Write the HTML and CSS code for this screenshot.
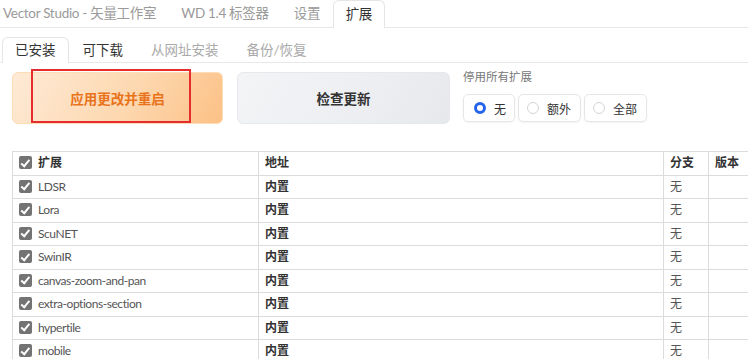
FILE: index.html
```html
<!DOCTYPE html>
<html lang="zh-CN">
<head>
<meta charset="utf-8">
<title>扩展</title>
<link rel="stylesheet" href="styles.css">
</head>
<body>
<nav class="topnav">
  <span class="tab first">Vector Studio - 矢量工作室</span>
  <span class="tab">WD 1.4 标签器</span>
  <span class="tab">设置</span>
  <span class="tab active">扩展</span>
</nav>
<nav class="subnav">
  <span class="subtab active">已安装</span>
  <span class="subtab dark">可下载</span>
  <span class="subtab">从网址安装</span>
  <span class="subtab">备份/恢复</span>
</nav>
<section class="actions">
  <button class="btn primary">应用更改并重启<span class="highlight"></span></button>
  <button class="btn secondary">检查更新</button>
  <div class="disable">
    <div class="disable-label">停用所有扩展</div>
    <div class="radios">
      <label class="radio checked"><span class="dot"></span>无</label>
      <label class="radio"><span class="dot"></span>额外</label>
      <label class="radio"><span class="dot"></span>全部</label>
    </div>
  </div>
</section>
<div class="table-wrap">
<table class="ext">
  <colgroup>
    <col class="c1"><col class="c2"><col class="c3"><col class="c4">
  </colgroup>
  <thead>
    <tr><th><span class="cb"></span>扩展</th><th>地址</th><th>分支</th><th>版本</th></tr>
  </thead>
  <tbody>
    <tr><td class="name"><span class="cb"></span>LDSR</td><td class="b">内置</td><td>无</td><td></td></tr>
    <tr><td class="name"><span class="cb"></span>Lora</td><td class="b">内置</td><td>无</td><td></td></tr>
    <tr><td class="name"><span class="cb"></span>ScuNET</td><td class="b">内置</td><td>无</td><td></td></tr>
    <tr><td class="name"><span class="cb"></span>SwinIR</td><td class="b">内置</td><td>无</td><td></td></tr>
    <tr><td class="name"><span class="cb"></span>canvas-zoom-and-pan</td><td class="b">内置</td><td>无</td><td></td></tr>
    <tr><td class="name"><span class="cb"></span>extra-options-section</td><td class="b">内置</td><td>无</td><td></td></tr>
    <tr><td class="name"><span class="cb"></span>hypertile</td><td class="b">内置</td><td>无</td><td></td></tr>
    <tr><td class="name"><span class="cb"></span>mobile</td><td class="b">内置</td><td>无</td><td></td></tr>
  </tbody>
</table>
</div>
</body>
</html>
```

FILE: styles.css
```css
html, body {
  margin: 0;
  padding: 0;
  background: #fff;
  overflow: hidden;
}
body {
  font-family: Lato, "Noto Sans CJK SC", sans-serif;
  color: #333;
  width: 748px;
  height: 359px;
}

.topnav {
  display: flex;
  align-items: flex-end;
  height: 28px;
  border-bottom: 1px solid #e8e8e8;
  box-sizing: border-box;
}
.tab {
  font-size: 13.5px;
  letter-spacing: -0.3px;
  color: #9a9a9a;
  padding: 0 12.5px;
  height: 27px;
  line-height: 27px;
  box-sizing: border-box;
  white-space: nowrap;
}
.tab.first { padding-left: 3px; }
.tab.active {
  color: #333;
  background: #fff;
  border: 1px solid #e5e5e5;
  border-bottom: none;
  border-radius: 6px 6px 0 0;
  margin-bottom: -1px;
  height: 28px;
  line-height: 26px;
  padding: 0 12px;
}

.subnav {
  display: flex;
  align-items: flex-end;
  height: 35px;
  border-bottom: 1px solid #e8e8e8;
  box-sizing: border-box;
}
.subtab {
  font-size: 13.5px;
  color: #aaa;
  padding: 0 14px;
  height: 24px;
  line-height: 24px;
  white-space: nowrap;
}
.subtab.dark { color: #333; }
.subtab.active {
  color: #333;
  margin-left: 2px;
  border: 1px solid #e5e5e5;
  border-bottom: none;
  border-radius: 6px 6px 0 0;
  background: #fff;
  margin-bottom: -1px;
  height: 25px;
  padding: 0 12px;
}

.actions {
  display: flex;
  align-items: flex-start;
  padding: 9px 12px 0;
}
.btn {
  font-family: inherit;
  font-size: 13.5px;
  font-weight: 700;
  height: 52px;
  border-radius: 6px;
  cursor: pointer;
  position: relative;
}
.btn.primary {
  width: 211px;
  color: #e8731b;
  border: 1px solid #fddcb8;
  background: linear-gradient(120deg, #feead6 0%, #fdd8b0 55%, #fcc186 100%);
}
.btn.secondary {
  width: 213px;
  margin-left: 14px;
  color: #333;
  border: 1px solid #e6e8ec;
  background: linear-gradient(120deg, #f3f4f6 0%, #eceef1 60%, #e6e8ec 100%);
}
.highlight {
  position: absolute;
  left: 18px;
  top: -4px;
  width: 160px;
  height: 54px;
  border: 2px solid #e52d2d;
  box-sizing: border-box;
}

.disable {
  margin-left: 13px;
}
.disable-label {
  font-size: 11.5px;
  color: #777;
  line-height: 14px;
  margin-top: -2px;
}
.radios {
  display: flex;
  gap: 3px;
  margin-top: 10px;
}
.radio {
  display: flex;
  align-items: center;
  height: 28px;
  padding: 0 8px 0 10px;
  border: 1px solid #e6e6e6;
  border-radius: 5px;
  box-shadow: 0 1px 2px rgba(0,0,0,0.05);
  font-size: 12px;
  color: #333;
  box-sizing: border-box;
}
.radio:nth-child(n+2) { padding-left: 8px; padding-right: 9px; }
.dot {
  width: 12px;
  height: 12px;
  border-radius: 50%;
  border: 1px solid #d4d4d4;
  margin-right: 8px;
  box-sizing: border-box;
  background: #fff;
}
.radio.checked .dot {
  border: 3.5px solid #2563eb;
  background: #fff;
}

.table-wrap {
  margin: 27px 0 0 12px;
  overflow: hidden;
}
.ext {
  border-collapse: collapse;
  table-layout: fixed;
  width: 790px;
  font-size: 12px;
}
.ext col.c1 { width: 246px; }
.ext col.c2 { width: 405px; }
.ext col.c3 { width: 45px; }
.ext col.c4 { width: 94px; }
.ext th, .ext td {
  border: 1px solid #dcdcdc;
  text-align: left;
  padding: 0 6px;
  height: 22.5px;
  line-height: 16px;
  white-space: nowrap;
  overflow: hidden;
}
.ext th {
  font-weight: 700;
  color: #333;
}
.ext td { color: #555; }
.ext td.name { letter-spacing: -0.45px; }
.ext td.b { font-weight: 700; color: #333; }
.cb {
  display: inline-block;
  vertical-align: -2px;
  width: 13px;
  height: 13px;
  border-radius: 2px;
  background: #737373;
  margin-right: 6px;
  position: relative;
}
.cb::after {
  content: "";
  position: absolute;
  left: 4px;
  top: 1.5px;
  width: 3px;
  height: 6.5px;
  border: solid #fff;
  border-width: 0 2px 2px 0;
  transform: rotate(40deg);
}
```
